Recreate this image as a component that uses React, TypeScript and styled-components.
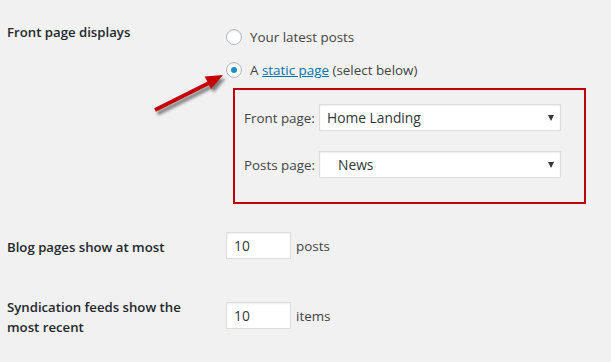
import React from 'react';
import styled, { createGlobalStyle } from 'styled-components';

const GlobalStyle = createGlobalStyle`
  html, body {
    margin: 0;
    padding: 0;
    background: #f1f1f1;
  }
  body {
    font-family: "Open Sans", "Liberation Sans", sans-serif;
    font-size: 13.4px;
    color: #444;
  }
`;

const Page = styled.div`
  position: relative;
  width: 611px;
  height: 362px;
  padding-left: 7px;
  box-sizing: border-box;
  background: #f1f1f1;
  overflow: hidden;
`;

const Row = styled.div<{ $top: number }>`
  display: grid;
  grid-template-columns: 219px 1fr;
  align-items: start;
  padding-top: ${(p) => p.$top}px;
`;

const Th = styled.div<{ $top?: number }>`
  padding-top: ${(p) => p.$top ?? 0}px;
  font-weight: 600;
  font-size: 13.2px;
  line-height: 20px;
  color: #23282d;
  width: 200px;
`;

const Td = styled.div<{ $top?: number }>`
  padding-top: ${(p) => p.$top ?? 0}px;
  display: flex;
  flex-direction: column;
`;

const Option = styled.label`
  display: flex;
  align-items: center;
  gap: 8px;
  height: 20px;
  line-height: 20px;
  color: #444;
  & + & {
    margin-top: 13px;
  }
`;

const Radio = styled.span<{ $checked?: boolean }>`
  width: 16px;
  height: 16px;
  box-sizing: border-box;
  border-radius: 50%;
  border: 1px solid #b4b9be;
  background: #fff;
  box-shadow: inset 0 1px 2px rgba(0, 0, 0, 0.1);
  display: flex;
  align-items: center;
  justify-content: center;
  &::after {
    content: '';
    display: ${(p) => (p.$checked ? 'block' : 'none')};
    width: 6px;
    height: 6px;
    border-radius: 50%;
    background: #1e8cbe;
  }
`;

const Link = styled.a`
  color: #0073aa;
  text-decoration: underline;
`;

const PageBox = styled.div`
  margin: 8px 0 0 7px;
  width: 353px;
  box-sizing: border-box;
  border: 2px solid #c00000;
  padding: 14px 22px 24px 9px;
  display: flex;
  flex-direction: column;
  gap: 20px;
`;

const SelectRow = styled.div`
  display: flex;
  align-items: center;
`;

const SelectLabel = styled.span`
  width: 75px;
  color: #444;
`;

const Select = styled.div<{ $indent?: number }>`
  width: 242px;
  height: 27px;
  box-sizing: border-box;
  background: #fff;
  border: 1px solid #ddd;
  box-shadow: inset 0 1px 2px rgba(0, 0, 0, 0.07);
  display: flex;
  align-items: center;
  justify-content: space-between;
  padding: 0 6px 0 ${(p) => p.$indent ?? 7}px;
  color: #32373c;
  font-size: 13.8px;
`;

const Caret = styled.span`
  width: 0;
  height: 0;
  border-left: 3.5px solid transparent;
  border-right: 3.5px solid transparent;
  border-top: 6px solid #32373c;
`;

const NumberLine = styled.div`
  display: flex;
  align-items: center;
  gap: 5px;
  color: #444;
`;

const NumberInput = styled.div`
  width: 65px;
  height: 27px;
  box-sizing: border-box;
  background: #fff;
  border: 1px solid #ddd;
  box-shadow: inset 0 1px 2px rgba(0, 0, 0, 0.07);
  display: flex;
  align-items: center;
  padding-left: 7px;
  color: #32373c;
  font-size: 13.8px;
`;

const Pointer = styled.svg`
  position: absolute;
  left: 140px;
  top: 60px;
`;

function Arrow() {
  return (
    <Pointer width="100" height="65" viewBox="140 60 100 65">
      <defs>
        <filter id="sh" x="-20%" y="-20%" width="140%" height="140%">
          <feGaussianBlur stdDeviation="1.6" />
        </filter>
      </defs>
      <g transform="translate(2.5 3.5)" filter="url(#sh)" fill="#555" stroke="#555" opacity="0.75">
        <line x1="155" y1="110" x2="209" y2="83" strokeWidth="4" />
        <polygon points="223,75 204.7,76.6 211.1,89" stroke="none" />
      </g>
      <line x1="155" y1="110" x2="209" y2="83" stroke="#c40000" strokeWidth="4" />
      <polygon points="223,75 204.7,76.6 211.1,89" fill="#c40000" />
    </Pointer>
  );
}

export default function App() {
  return (
    <Page>
      <GlobalStyle />
      <Row $top={22}>
        <Th>Front page displays</Th>
        <Td $top={5}>
          <Option>
            <Radio />
            Your latest posts
          </Option>
          <Option>
            <Radio $checked />
            <span>
              A <Link>static page</Link> (select below)
            </span>
          </Option>
          <PageBox>
            <SelectRow>
              <SelectLabel>Front page:</SelectLabel>
              <Select>
                Home Landing
                <Caret />
              </Select>
            </SelectRow>
            <SelectRow>
              <SelectLabel>Posts page:</SelectLabel>
              <Select $indent={18}>
                News
                <Caret />
              </Select>
            </SelectRow>
          </PageBox>
        </Td>
      </Row>
      <Row $top={28}>
        <Th $top={5}>Blog pages show at most</Th>
        <Td>
          <NumberLine>
            <NumberInput>10</NumberInput>
            posts
          </NumberLine>
        </Td>
      </Row>
      <Row $top={38}>
        <Th>Syndication feeds show the most recent</Th>
        <Td $top={5}>
          <NumberLine>
            <NumberInput>10</NumberInput>
            items
          </NumberLine>
        </Td>
      </Row>
      <Arrow />
    </Page>
  );
}
